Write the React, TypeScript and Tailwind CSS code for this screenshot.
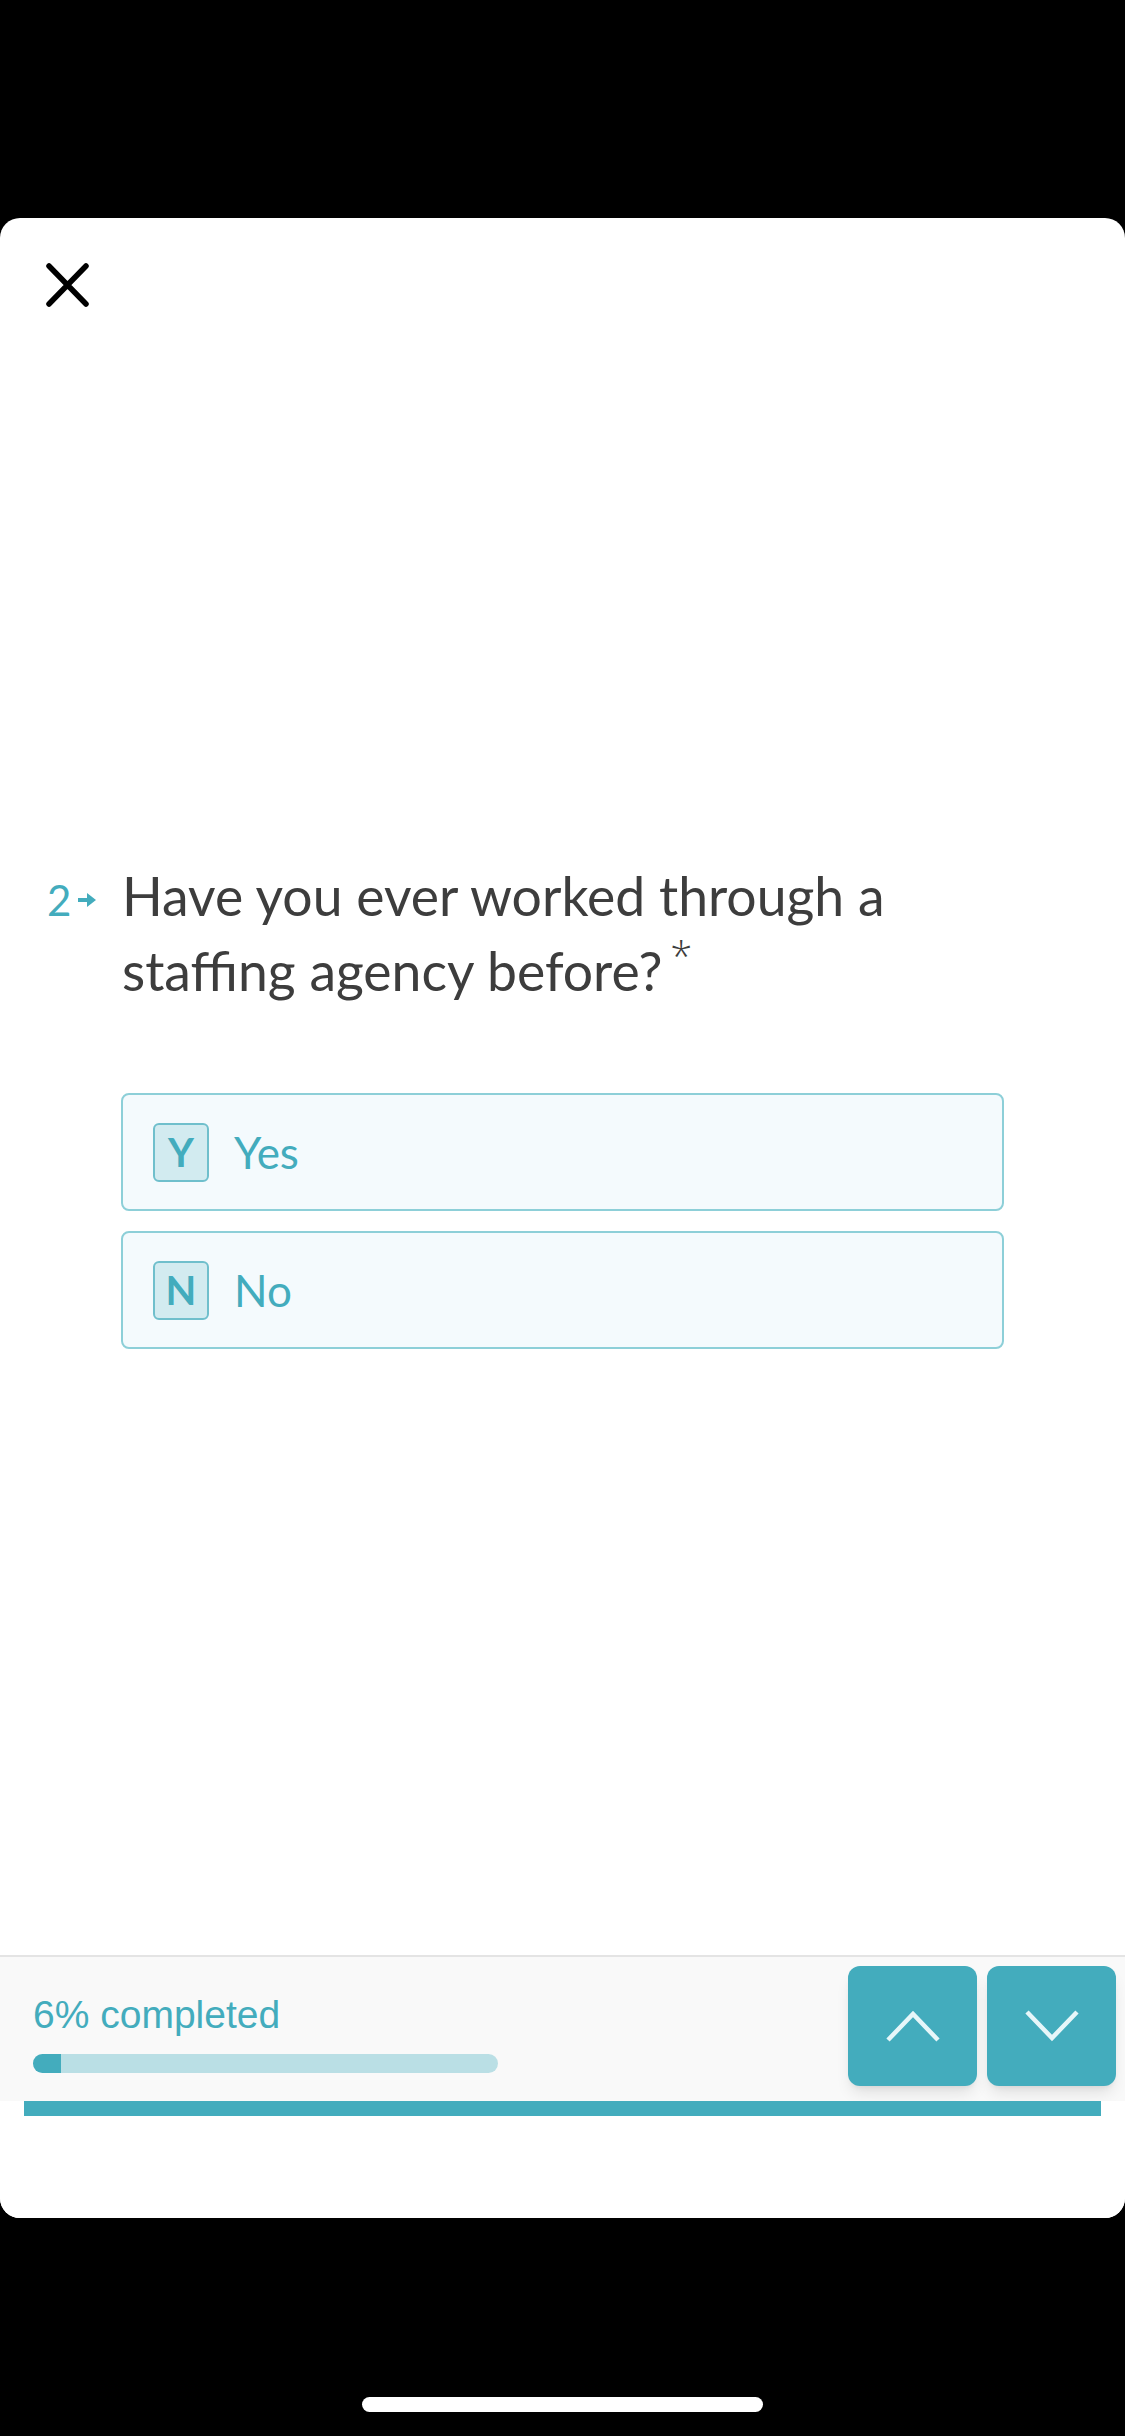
import React from 'react';

const teal = '#43acbd';

function CloseIcon() {
  return (
    <svg width="43" height="44" viewBox="0 0 43 44" fill="none">
      <path d="M3 3 L40 41 M40 3 L3 41" stroke="#000" strokeWidth="5.5" strokeLinecap="round" />
    </svg>
  );
}

function NumberArrow() {
  return (
    <svg width="18" height="14" viewBox="0 0 18 14" className="ml-[7px]">
      <rect x="0" y="5" width="10" height="4" fill={teal} />
      <path d="M9 0 L18 7 L9 14 Z" fill={teal} />
    </svg>
  );
}

function Option({ k, label }: { k: string; label: string }) {
  return (
    <div className="flex h-[118px] w-[883px] items-center rounded-[8px] border-2 border-[#8dcfd8] bg-[#f4fafd] pl-[30px]">
      <div className="flex h-[59px] w-[56px] items-center justify-center rounded-[6px] border-2 border-[#6fbfcc] bg-[#d2ebf0] text-[40px] font-bold leading-none text-[#43acbd]">
        {k}
      </div>
      <span className="ml-[25px] text-[44px] leading-none text-[#43acbd]">{label}</span>
    </div>
  );
}

export default function App() {
  return (
    <div
      className="flex min-h-[2436px] w-[1125px] flex-col bg-black"
      style={{ fontFamily: 'Lato, "Noto Sans", sans-serif' }}
    >
      <div className="h-[218px]" />

      {/* Card */}
      <div className="flex h-[2000px] flex-col overflow-hidden rounded-[20px] bg-white">
        <div className="flex-1">
          <div className="pl-[46px] pt-[45px]">
            <CloseIcon />
          </div>

          {/* Question */}
          <div className="mt-[551px] flex items-baseline pl-[47px]">
            <div className="flex w-[75px] items-center text-[42px] leading-none text-[#43acbd]">
              <span>2</span>
              <NumberArrow />
            </div>
            <p className="w-[880px] text-[53.5px] leading-[75px] text-[#3d3d3d]">
              Have you ever worked through a staffing agency before?
              <span
                className="relative -top-[20px] ml-[8px] text-[40px] font-light leading-none"
                style={{ fontFamily: '"Open Sans", sans-serif' }}
              >
                *
              </span>
            </p>
          </div>

          {/* Options */}
          <div className="ml-[121px] mt-[85px] flex flex-col gap-[20px]">
            <Option k="Y" label="Yes" />
            <Option k="N" label="No" />
          </div>
        </div>

        {/* Footer */}
        <div className="border-t-2 border-[#e4e4e4] bg-[#f9f9f9]">
          <div className="flex h-[144px] justify-between pl-[33px] pr-[9px]">
            <div className="pt-[38px]">
              <div
                className="text-[39px] leading-none text-[#43acbd]"
                style={{ fontFamily: '"Liberation Sans", Arial, sans-serif' }}
              >
                6% completed
              </div>
              <div className="mt-[20px] h-[19px] w-[465px] overflow-hidden rounded-full bg-[#badfe5]">
                <div className="h-full w-[28px] bg-[#43acbd]" />
              </div>
            </div>
            <div className="flex gap-[10px] pt-[9px]">
              <button className="flex h-[120px] w-[129px] items-center justify-center rounded-[12px] bg-[#43acbd] shadow-lg">
                <svg width="56" height="34" viewBox="0 0 56 34" fill="none">
                  <path d="M3 31 L28 5 L53 31" stroke="#e6f6f9" strokeWidth="4.5" />
                </svg>
              </button>
              <button className="flex h-[120px] w-[129px] items-center justify-center rounded-[12px] bg-[#43acbd] shadow-lg">
                <svg width="56" height="34" viewBox="0 0 56 34" fill="none">
                  <path d="M3 3 L28 29 L53 3" stroke="#e6f6f9" strokeWidth="4.5" />
                </svg>
              </button>
            </div>
          </div>
        </div>
        <div className="bg-white">
          <div className="ml-[24px] h-[15px] w-[1077px] bg-[#43acbd]" />
        </div>
        <div className="h-[102px] bg-white" />
      </div>

      {/* Home indicator */}
      <div className="mt-[179px] flex justify-center">
        <div className="h-[15px] w-[401px] rounded-full bg-white" />
      </div>
    </div>
  );
}
